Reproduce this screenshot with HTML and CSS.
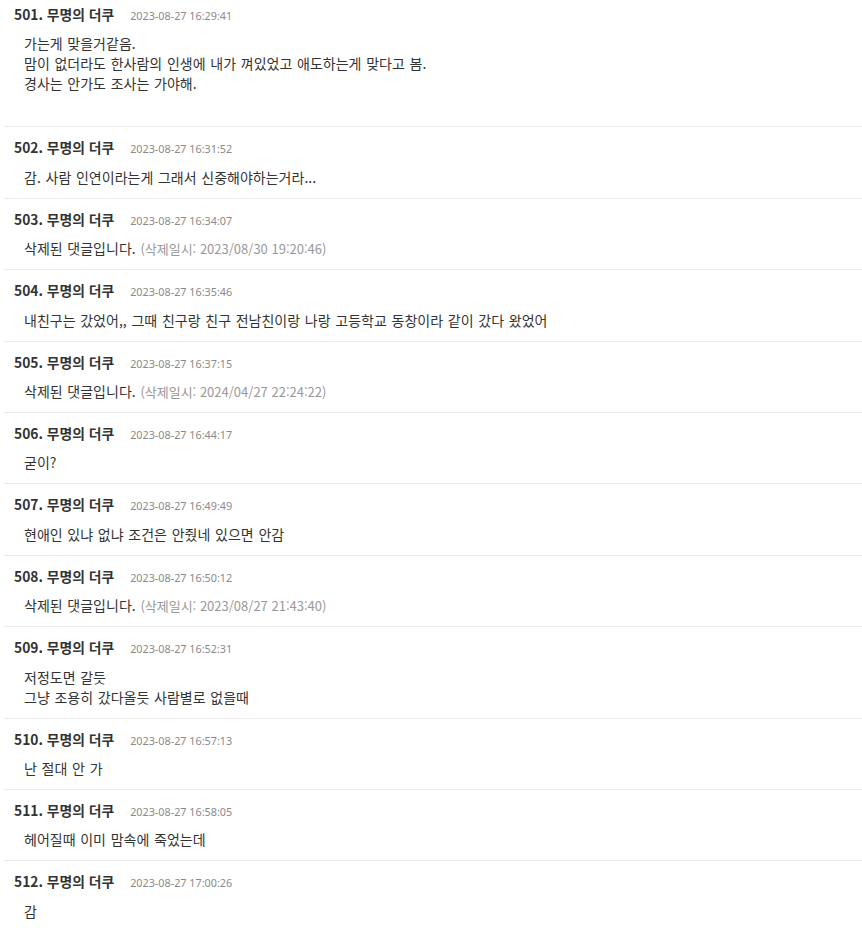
FILE: index.html
```html
<!DOCTYPE html>
<html lang="ko">
<head>
  <meta charset="UTF-8">
  <meta name="viewport" content="width=device-width, initial-scale=1.0">
  <title>댓글</title>
  <link rel="stylesheet" href="styles.css">
</head>
<body>
  <ul class="comments">
    <li class="comment comment-tall">
      <div class="comment-head"><span class="comment-name">501. 무명의 더쿠</span><span class="comment-date">2023-08-27 16:29:41</span></div>
      <div class="comment-body">가는게 맞을거같음.<br>맘이 없더라도 한사람의 인생에 내가 껴있었고 애도하는게 맞다고 봄.<br>경사는 안가도 조사는 가야해.</div>
    </li>
    <li class="comment">
      <div class="comment-head"><span class="comment-name">502. 무명의 더쿠</span><span class="comment-date">2023-08-27 16:31:52</span></div>
      <div class="comment-body">감. 사람 인연이라는게 그래서 신중해야하는거라...</div>
    </li>
    <li class="comment">
      <div class="comment-head"><span class="comment-name">503. 무명의 더쿠</span><span class="comment-date">2023-08-27 16:34:07</span></div>
      <div class="comment-body">삭제된 댓글입니다. <span class="deleted-at">(삭제일시: 2023/08/30 19:20:46)</span></div>
    </li>
    <li class="comment">
      <div class="comment-head"><span class="comment-name">504. 무명의 더쿠</span><span class="comment-date">2023-08-27 16:35:46</span></div>
      <div class="comment-body">내친구는 갔었어,, 그때 친구랑 친구 전남친이랑 나랑 고등학교 동창이라 같이 갔다 왔었어</div>
    </li>
    <li class="comment">
      <div class="comment-head"><span class="comment-name">505. 무명의 더쿠</span><span class="comment-date">2023-08-27 16:37:15</span></div>
      <div class="comment-body">삭제된 댓글입니다. <span class="deleted-at">(삭제일시: 2024/04/27 22:24:22)</span></div>
    </li>
    <li class="comment">
      <div class="comment-head"><span class="comment-name">506. 무명의 더쿠</span><span class="comment-date">2023-08-27 16:44:17</span></div>
      <div class="comment-body">굳이?</div>
    </li>
    <li class="comment">
      <div class="comment-head"><span class="comment-name">507. 무명의 더쿠</span><span class="comment-date">2023-08-27 16:49:49</span></div>
      <div class="comment-body">현애인 있냐 없냐 조건은 안줬네 있으면 안감</div>
    </li>
    <li class="comment">
      <div class="comment-head"><span class="comment-name">508. 무명의 더쿠</span><span class="comment-date">2023-08-27 16:50:12</span></div>
      <div class="comment-body">삭제된 댓글입니다. <span class="deleted-at">(삭제일시: 2023/08/27 21:43:40)</span></div>
    </li>
    <li class="comment">
      <div class="comment-head"><span class="comment-name">509. 무명의 더쿠</span><span class="comment-date">2023-08-27 16:52:31</span></div>
      <div class="comment-body">저정도면 갈듯<br>그냥 조용히 갔다올듯 사람별로 없을때</div>
    </li>
    <li class="comment">
      <div class="comment-head"><span class="comment-name">510. 무명의 더쿠</span><span class="comment-date">2023-08-27 16:57:13</span></div>
      <div class="comment-body">난 절대 안 가</div>
    </li>
    <li class="comment">
      <div class="comment-head"><span class="comment-name">511. 무명의 더쿠</span><span class="comment-date">2023-08-27 16:58:05</span></div>
      <div class="comment-body">헤어질때 이미 맘속에 죽었는데</div>
    </li>
    <li class="comment">
      <div class="comment-head"><span class="comment-name">512. 무명의 더쿠</span><span class="comment-date">2023-08-27 17:00:26</span></div>
      <div class="comment-body">감</div>
    </li>
  </ul>
</body>
</html>
```

FILE: styles.css
```css
body {
  margin: 0;
  padding: 0;
  background: #fff;
  color: #333;
  font-family: "Noto Sans CJK KR", "Liberation Sans", sans-serif;
  overflow: hidden;
}
.comments {
  list-style: none;
  margin: -7px 0 0 4px;
  padding: 0;
}
.comment {
  border-top: 1px solid #ebebeb;
  padding: 10px 0 11px 10px;
}
.comment-tall {
  padding-bottom: 33px;
}
.comment-head {
  display: flex;
  align-items: baseline;
  gap: 16px;
  height: 20px;
  line-height: 20px;
}
.comment-name {
  font-size: 13.8px;
  font-weight: bold;
  color: #333;
}
.comment-date {
  font-family: "Noto Sans", "Liberation Sans", sans-serif;
  font-size: 10.8px;
  color: #8a8a8a;
}
.comment-body {
  margin-top: 9.4px;
  padding-left: 10px;
  font-size: 14px;
  line-height: 20px;
  word-spacing: 0.8px;
  color: #333;
}
.deleted-at {
  font-size: 13px;
  line-height: 18px;
  word-spacing: 0;
  color: #999;
}
```
